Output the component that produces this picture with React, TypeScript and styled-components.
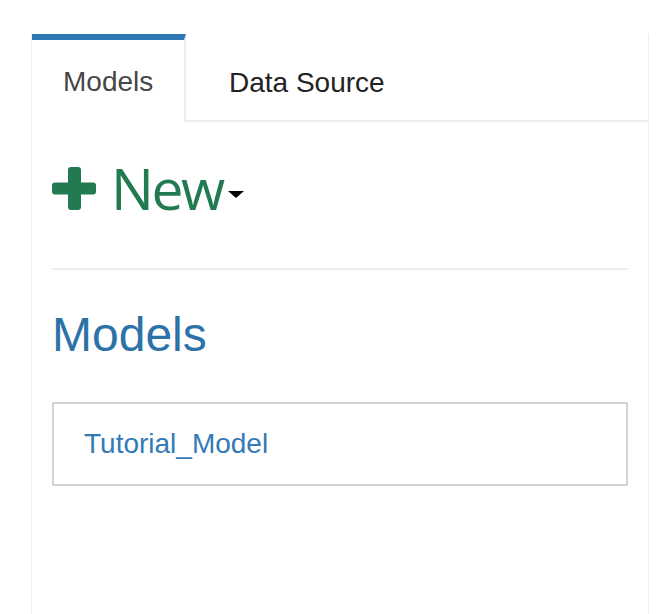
import React from "react";
import styled, { createGlobalStyle } from "styled-components";

const GlobalStyle = createGlobalStyle`
  html, body { margin: 0; padding: 0; background: #ffffff; }
  body { font-family: "Liberation Sans", Arial, sans-serif; }
`;

const Page = styled.div`
  padding: 34px 0 0 31px;
  height: 614px;
  box-sizing: border-box;
  overflow: hidden;
`;

const Panel = styled.div`
  width: 618px;
  height: 580px;
  box-sizing: border-box;
  border-left: 1px solid #efefef;
  border-right: 1px solid #efefef;
`;

const Nav = styled.div`
  display: flex;
  height: 88px;
`;

const Tab = styled.div<{ $active?: boolean }>`
  box-sizing: border-box;
  height: 88px;
  font-size: 28px;
  line-height: 40px;
  ${(p) =>
    p.$active
      ? `
    width: 154px;
    border-top: 6px solid #2e78b5;
    border-right: 2px solid #eeeeee;
    padding: 22px 0 0 31px;
    color: #474747;
  `
      : `
    flex: 1;
    border-bottom: 2px solid #eeeeee;
    padding: 29px 0 0 43px;
    color: #222222;
  `}
`;

const Content = styled.div`
  padding: 0 20px;
`;

const NewRow = styled.div`
  display: flex;
  align-items: center;
  height: 58px;
  margin-top: 37px;
  color: #217a50;
`;

const PlusIcon = styled.svg`
  width: 44px;
  height: 43px;
  margin-right: 15px;
  flex: none;
`;

const NewLabel = styled.span`
  font-family: "Open Sans", "Noto Sans", sans-serif;
  font-size: 57px;
  line-height: 58px;
  letter-spacing: -2.5px;
`;

const Caret = styled.span`
  width: 0;
  height: 0;
  margin-left: 5px;
  margin-top: 12px;
  border-top: 7px solid #000;
  border-left: 8px solid transparent;
  border-right: 8px solid transparent;
`;

const Divider = styled.hr`
  border: 0;
  border-top: 2px solid #eeeeee;
  margin: 51px 0 0;
`;

const Heading = styled.h3`
  font-size: 48px;
  line-height: 52.8px;
  font-weight: 400;
  color: #2c72a6;
  margin: 39px 0 40px;
`;

const ListGroup = styled.div`
  display: flex;
  flex-direction: column;
`;

const ListItem = styled.a`
  display: block;
  border: 2px solid #d5d5d5;
  padding: 20px 30px;
  font-size: 28px;
  line-height: 40px;
  color: #337ab7;
  text-decoration: none;
`;

export default function App() {
  return (
    <>
      <GlobalStyle />
      <Page>
        <Panel>
          <Nav>
            <Tab $active>Models</Tab>
            <Tab>Data Source</Tab>
          </Nav>
          <Content>
            <NewRow>
              <PlusIcon viewBox="0 0 44 43">
                <rect x="16" y="0" width="13" height="43" rx="3" fill="#217a50" />
                <rect x="0" y="15.5" width="44" height="12" rx="3" fill="#217a50" />
              </PlusIcon>
              <NewLabel>New</NewLabel>
              <Caret />
            </NewRow>
            <Divider />
            <Heading>Models</Heading>
            <ListGroup>
              <ListItem href="#">Tutorial_Model</ListItem>
            </ListGroup>
          </Content>
        </Panel>
      </Page>
    </>
  );
}
